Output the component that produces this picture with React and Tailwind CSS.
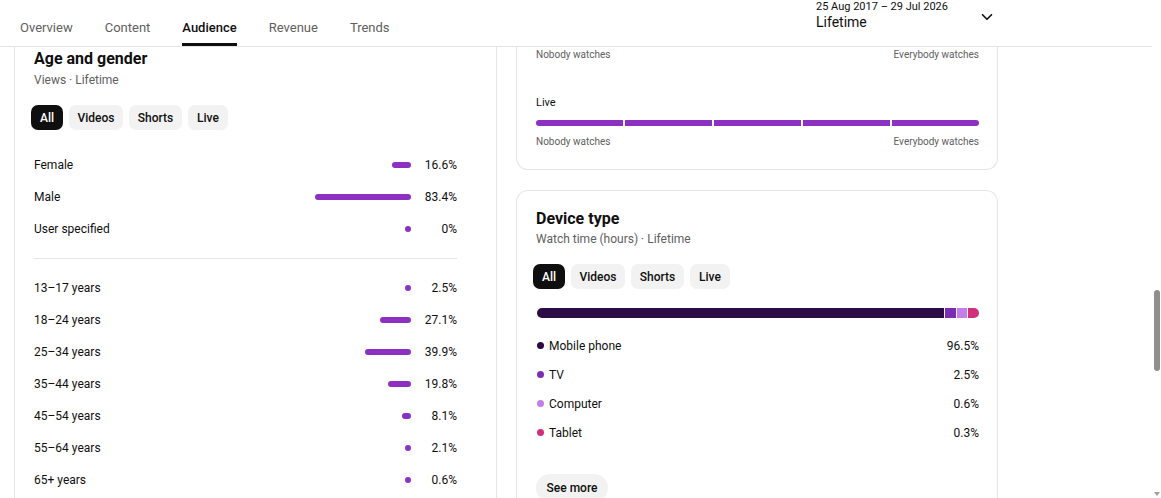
import React from "react";
import { ChevronDown } from "lucide-react";

const font = { fontFamily: "Roboto, 'Noto Sans', Arial, sans-serif" };

function Chips() {
  const items = [
    ["All", "w-[32px]", true],
    ["Videos", "w-[54px]", false],
    ["Shorts", "w-[53px]", false],
    ["Live", "w-[40px]", false],
  ];
  return (
    <div className="flex gap-[6px] -ml-[3px]">
      {items.map(([t, w, a]) => (
        <div
          key={t}
          className={`${w} h-[25px] rounded-[7px] flex items-center justify-center text-[12px] font-medium ${
            a ? "bg-[#0f0f0f] text-white" : "bg-[#f2f2f2] text-[#0f0f0f]"
          }`}
        >
          {t}
        </div>
      ))}
    </div>
  );
}

function BarRow({ label, value, pct }) {
  const w = Math.max(6, Math.round(115 * pct / 100));
  return (
    <div className="flex items-center h-[32px]">
      <div className="flex-1 text-[12px] text-[#0f0f0f]">{label}</div>
      <div className="flex justify-end w-[120px]">
        <div className="h-[6px] rounded-full bg-[#8b30c0]" style={{ width: w }} />
      </div>
      <div className="w-[46px] text-right text-[12px] text-[#0f0f0f]">{value}</div>
    </div>
  );
}

function Legend({ color, label, value }) {
  return (
    <div className="flex items-center h-[29px]">
      <div className={`w-[7px] h-[7px] rounded-full ${color} ml-[1px]`} />
      <div className="ml-[5px] flex-1 text-[12px] text-[#0f0f0f]">{label}</div>
      <div className="text-[12px] text-[#0f0f0f]">{value}</div>
    </div>
  );
}

export default function App() {
  const tabs = ["Overview", "Content", "Audience", "Revenue", "Trends"];
  return (
    <div className="w-[1161px] h-[498px] overflow-hidden bg-white flex" style={font}>
      <div className="w-[1152px] flex flex-col">
        <div className="h-[47px] border-b border-[#e5e5e5] flex items-stretch shrink-0">
          <div className="flex gap-8 pl-[20px] items-stretch">
            {tabs.map((t) => (
              <div
                key={t}
                className={`flex items-center text-[13px] border-b-[3px] pt-[12px] ${
                  t === "Audience"
                    ? "border-[#0f0f0f] text-[#0f0f0f] font-medium"
                    : "border-transparent text-[#606060]"
                }`}
              >
                {t}
              </div>
            ))}
          </div>
          <div className="ml-auto mr-[156px] w-[180px] flex items-start">
            <div className="flex flex-col">
              <div className="text-[11px] leading-[14px] text-[#0f0f0f]">25 Aug 2017 – 29 Jul 2026</div>
              <div className="text-[14px] leading-[16px] text-[#0f0f0f]">Lifetime</div>
            </div>
            <ChevronDown className="ml-auto mt-[8px]" size={18} strokeWidth={2.2} color="#0f0f0f" />
          </div>
        </div>

        <div className="flex gap-[19px] pl-[14px] flex-1 min-h-0">
          <div className="w-[483px] border-x border-[#e5e5e5] pl-[19px] pr-[39px] pt-[1px] overflow-hidden">
            <div className="text-[16px] leading-[22px] font-bold text-[#0f0f0f]">Age and gender</div>
            <div className="text-[12px] leading-[16px] text-[#606060] mt-[2px]">Views · Lifetime</div>
            <div className="mt-[17px]">
              <Chips />
            </div>
            <div className="mt-[19px]">
              <BarRow label="Female" value="16.6%" pct={16.6} />
              <BarRow label="Male" value="83.4%" pct={83.4} />
              <BarRow label="User specified" value="0%" pct={0} />
            </div>
            <div className="border-t border-[#e5e5e5] my-[13px]" />
            <div>
              <BarRow label="13–17 years" value="2.5%" pct={2.5} />
              <BarRow label="18–24 years" value="27.1%" pct={27.1} />
              <BarRow label="25–34 years" value="39.9%" pct={39.9} />
              <BarRow label="35–44 years" value="19.8%" pct={19.8} />
              <BarRow label="45–54 years" value="8.1%" pct={8.1} />
              <BarRow label="55–64 years" value="2.1%" pct={2.1} />
              <BarRow label="65+ years" value="0.6%" pct={0.6} />
            </div>
          </div>

          <div className="w-[482px] flex flex-col gap-[20px]">
            <div className="border-x border-b border-[#e5e5e5] rounded-b-[12px] pl-[19px] pr-[18px] pt-[1px] pb-[20px]">
              <div className="flex justify-between text-[10px] leading-[14px] text-[#606060]">
                <span>Nobody watches</span>
                <span>Everybody watches</span>
              </div>
              <div className="mt-[33px] text-[11px] leading-[16px] text-[#0f0f0f]">Live</div>
              <div className="mt-[9px] flex gap-[2px] h-[6px]">
                <div className="flex-1 bg-[#8b30c0] rounded-l-full" />
                <div className="flex-1 bg-[#8b30c0]" />
                <div className="flex-1 bg-[#8b30c0]" />
                <div className="flex-1 bg-[#8b30c0]" />
                <div className="flex-1 bg-[#8b30c0] rounded-r-full" />
              </div>
              <div className="mt-[9px] flex justify-between text-[10px] leading-[14px] text-[#606060]">
                <span>Nobody watches</span>
                <span>Everybody watches</span>
              </div>
            </div>

            <div className="flex-1 border-x border-t border-[#e5e5e5] rounded-t-[12px] pl-[19px] pr-[18px] pt-[17px]">
              <div className="text-[16px] leading-[22px] font-bold text-[#0f0f0f]">Device type</div>
              <div className="text-[12px] leading-[16px] text-[#606060] mt-[1px]">Watch time (hours) · Lifetime</div>
              <div className="mt-[17px]">
                <Chips />
              </div>
              <div className="mt-[19px] flex gap-[1px] h-[10px] ml-[1px]">
                <div className="flex-1 bg-[#2b0a45] rounded-l-full" />
                <div className="w-[11px] bg-[#7a2fb3]" />
                <div className="w-[10px] bg-[#c57ee9]" />
                <div className="w-[11px] bg-[#d12f7d] rounded-r-full" />
              </div>
              <div className="mt-[13px]">
                <Legend color="bg-[#2b0a45]" label="Mobile phone" value="96.5%" />
                <Legend color="bg-[#7a2fb3]" label="TV" value="2.5%" />
                <Legend color="bg-[#c57ee9]" label="Computer" value="0.6%" />
                <Legend color="bg-[#d12f7d]" label="Tablet" value="0.3%" />
              </div>
              <div className="mt-[27px] w-[72px] h-[28px] rounded-full bg-[#f2f2f2] flex items-center justify-center text-[12px] font-medium text-[#0f0f0f]">
                See more
              </div>
            </div>
          </div>
        </div>
      </div>
      <div className="w-[9px] relative bg-white">
        <div className="absolute left-[2px] top-[290px] w-[6px] h-[81px] rounded-full bg-[#8f8f8f]" />
        <div className="absolute left-[2px] bottom-[2px] w-0 h-0 border-l-[3px] border-r-[3px] border-t-[4px] border-l-transparent border-r-transparent border-t-[#a0a0a0]" />
      </div>
    </div>
  );
}
